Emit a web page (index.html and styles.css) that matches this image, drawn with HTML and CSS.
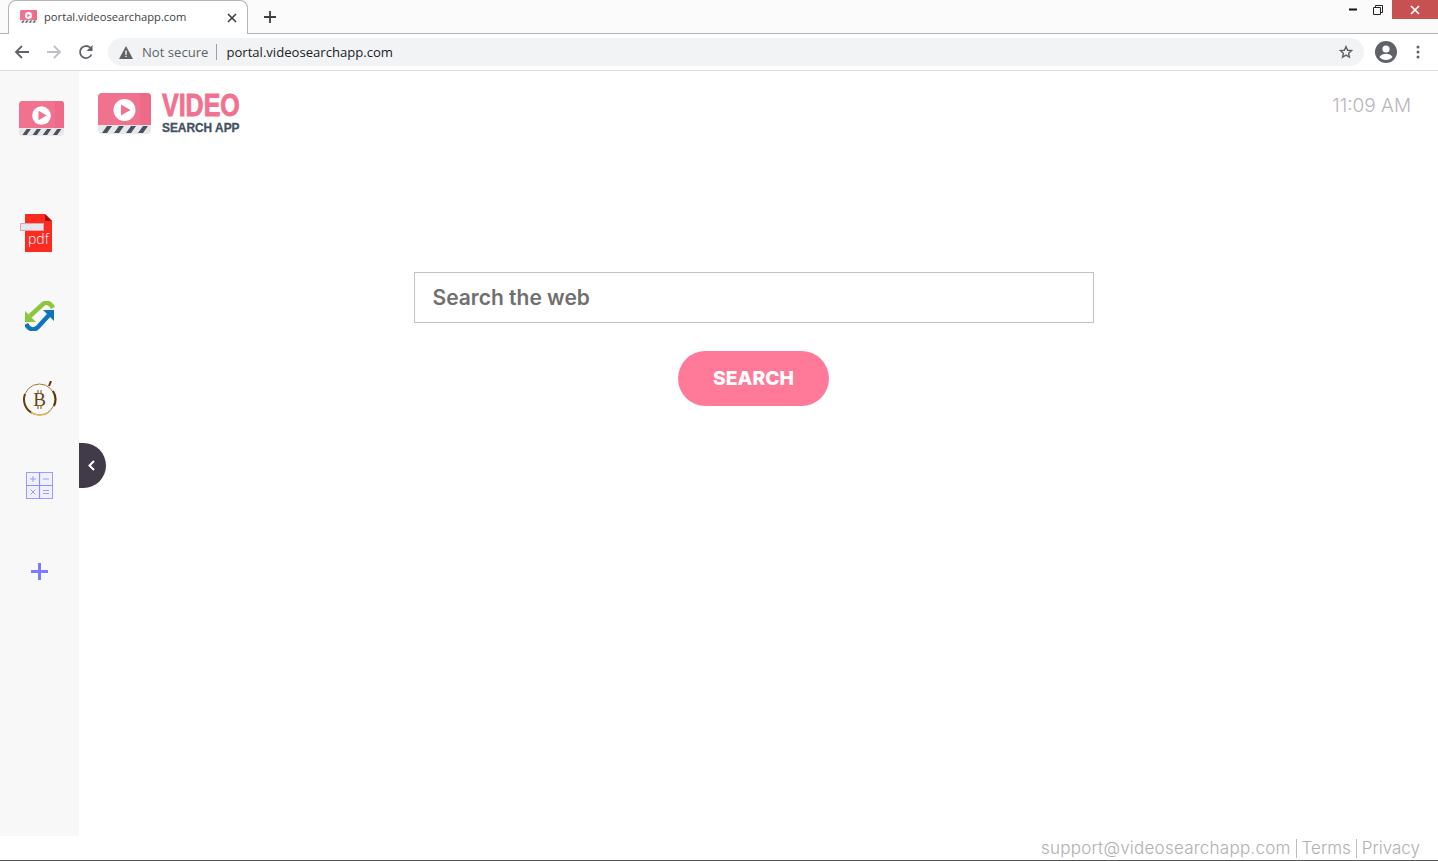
FILE: index.html
```html
<!DOCTYPE html>
<html lang="en">
<head>
<meta charset="utf-8">
<title>portal.videosearchapp.com</title>
<link rel="stylesheet" href="styles.css">
</head>
<body>
<svg class="defs" width="0" height="0" aria-hidden="true">
  <symbol id="mark" viewBox="0 0 53 41">
    <path d="M4 0h45a4 4 0 0 1 4 4v28H0V4a4 4 0 0 1 4-4z" fill="#f0728f"/>
    <path d="M42 0h7a4 4 0 0 1 4 4v28H42z" fill="#ee6a89"/>
    <path d="M0 32h53v5a4 4 0 0 1-4 4H4a4 4 0 0 1-4-4z" fill="#e8e8ea"/>
    <path d="M4 40l5-7h5l-5 7zM16 40l5-7h5l-5 7zM28 40l5-7h5l-5 7zM40 40l5-7h5l-5 7z" fill="#47525e"/>
    <circle cx="26.500" cy="17" r="11" fill="#fff"/>
    <path d="M23 11.500l9.500 5.500-9.500 5.500z" fill="#f0728f"/>
  </symbol>
</svg>

<header class="tabstrip">
  <div class="tab">
    <svg class="tab-icon" width="17" height="13"><use href="#mark"/></svg>
    <span class="tab-title">portal.videosearchapp.com</span>
    <svg class="tab-close" width="10" height="10" viewBox="0 0 10 10"><path d="M1 1l8 8M9 1l-8 8" stroke="#3c4043" stroke-width="1.600"/></svg>
  </div>
  <svg class="new-tab" width="12" height="12" viewBox="0 0 12 12"><path d="M6 0v12M0 6h12" stroke="#3c4043" stroke-width="1.800"/></svg>
  <div class="window-controls">
    <svg class="win-btn" width="8" height="3" viewBox="0 0 8 3"><path d="M0 1.500h8" stroke="#111" stroke-width="2"/></svg>
    <svg class="win-btn" width="10" height="10" viewBox="0 0 10 10"><path d="M.5 2.500h7v7h-7zM2.500 2.500v-2h7v7h-2" fill="none" stroke="#222"/></svg>
    <div class="win-close"><svg width="10" height="10" viewBox="0 0 10 10"><path d="M1 1l8 8M9 1l-8 8" stroke="#fff" stroke-width="1.700"/></svg></div>
  </div>
</header>

<nav class="toolbar">
  <svg class="nav-icon" width="16" height="16" viewBox="0 0 16 16"><path d="M15 8H2M8 2L2 8l6 6" fill="none" stroke="#5f6368" stroke-width="1.800"/></svg>
  <svg class="nav-icon" width="16" height="16" viewBox="0 0 16 16"><path d="M1 8h13M8 2l6 6-6 6" fill="none" stroke="#bdc1c6" stroke-width="1.800"/></svg>
  <svg class="nav-icon" width="16" height="16" viewBox="0 0 16 16"><path d="M13.500 10.500A6 6 0 1 1 12.200 3.700" fill="none" stroke="#5f6368" stroke-width="1.800"/><path d="M14.500 1v6h-6z" fill="#5f6368"/></svg>
  <div class="omnibox">
    <svg class="warn" width="14" height="13" viewBox="0 0 14 13"><path d="M7 0l7 13H0z" fill="#5f6368"/><path d="M6.300 4.500h1.400v4.200H6.300zM6.300 9.700h1.400v1.400H6.300z" fill="#fff"/></svg>
    <span class="not-secure">Not secure</span>
    <span class="omni-sep"></span>
    <span class="url">portal.videosearchapp.com</span>
    <svg class="star" width="14" height="14" viewBox="0 0 24 24"><path d="M12 2.800l2.800 6.200 6.700.7-5 4.500 1.400 6.600-5.900-3.400-5.900 3.400 1.400-6.600-5-4.500 6.700-.7z" fill="none" stroke="#5f6368" stroke-width="2.400"/></svg>
  </div>
  <svg class="avatar" width="22" height="22" viewBox="0 0 22 22"><circle cx="11" cy="11" r="11" fill="#5f6368"/><circle cx="11" cy="8" r="3.600" fill="#fff"/><path d="M4.500 16c1.500-2.500 4-3.200 6.500-3.200s5 .7 6.500 3.200c-1.500 2-3.800 3-6.500 3s-5-1-6.500-3z" fill="#fff"/></svg>
  <svg class="menu" width="4" height="14" viewBox="0 0 4 14"><circle cx="2" cy="2" r="1.500" fill="#5f6368"/><circle cx="2" cy="7" r="1.500" fill="#5f6368"/><circle cx="2" cy="12" r="1.500" fill="#5f6368"/></svg>
</nav>

<div class="page">
  <aside class="sidebar">
    <svg class="side-video" width="45" height="35"><use href="#mark"/></svg>
    <svg class="side-pdf" width="33" height="38" viewBox="0 0 33 38">
      <path d="M5 0h20l7 7v31H5z" fill="#fb2b21"/>
      <path d="M25 0l7 7h-7z" fill="#a80f0a"/>
      <rect x=".5" y="9.500" width="23" height="7" fill="#e6e6ea" stroke="#e3a4ad"/>
      <text class="pdf-label" x="8" y="30">pdf</text>
    </svg>
    <svg class="side-swap" width="30" height="30" viewBox="0 0 30 30">
      <path d="M28 7C25 1 21 1 18 3L5 15" fill="none" stroke="#8cc63f" stroke-width="4.500"/>
      <path d="M0 10v11h11z" fill="#8cc63f"/>
      <path d="M1 23c3 6 8 7 12 3L24 14" fill="none" stroke="#0f73bd" stroke-width="4.500"/>
      <path d="M29 9v11L18 9z" fill="#0f73bd"/>
    </svg>
    <svg class="side-btc" width="36" height="38" viewBox="0 0 36 38">
      <circle cx="17.500" cy="18.500" r="15.500" fill="none" stroke="#a87a30" stroke-width="1"/>
      <path d="M3 13A15.500 15.500 0 0 0 10 32" fill="none" stroke="#6b3f0a" stroke-width="2"/>
      <path d="M31 10A15.500 15.500 0 0 1 32 25M27 5l2-5" fill="none" stroke="#5b360a" stroke-width="2"/>
      <path d="M9 31c5 4 13 4 18 0" fill="none" stroke="#d9b860" stroke-width="1.500"/>
      <path d="M16 9v3M19 9v3M16 25v3M19 25v3" stroke="#7a5010"/>
      <text class="btc-label" x="17.500" y="25" text-anchor="middle">B</text>
    </svg>
    <svg class="side-calc" width="27" height="27" viewBox="0 0 27 27">
      <rect x=".5" y=".5" width="26" height="26" fill="#f1f1fb" stroke="#9a9aff"/>
      <path d="M13.500 0v27M0 13.500h27" stroke="#8f8fff" stroke-width="1.200"/>
      <path d="M4 7h6M7 4v6M17 7h6M4.500 17.500l5 5M9.500 17.500l-5 5M17 18.500h6M17 21.500h6" stroke="#9a9aff"/>
    </svg>
    <svg class="side-add" width="17" height="17" viewBox="0 0 17 17"><path d="M8.500 0v17M0 8.500h17" stroke="#7b7bff" stroke-width="3"/></svg>
  </aside>

  <button class="drawer-toggle" type="button" aria-label="Collapse">
    <svg width="7" height="11" viewBox="0 0 7 11"><path d="M6 1L1.500 5.500 6 10" fill="none" stroke="#fff" stroke-width="2"/></svg>
  </button>

  <main class="content">
    <div class="top-row">
      <div class="logo">
        <svg class="logo-mark" width="53" height="41"><use href="#mark"/></svg>
        <div class="logo-words">
          <span class="logo-video">VIDEO</span>
          <span class="logo-search">SEARCH APP</span>
        </div>
      </div>
      <div class="clock">11:09 AM</div>
    </div>
    <form class="search">
      <input class="search-input" type="text" placeholder="Search the web">
      <button class="search-btn" type="button">SEARCH</button>
    </form>
  </main>
</div>

<footer class="footer">
  <a class="foot-link foot-mail">support@videosearchapp.com</a>
  <a class="foot-link foot-divided">Terms</a>
  <a class="foot-link foot-divided">Privacy</a>
</footer>
</body>
</html>
```
FILE: styles.css
```css
* { box-sizing: border-box; }
html, body { margin: 0; height: 861px; overflow: hidden; }
body {
  display: flex;
  flex-direction: column;
  background: #fff;
  font-family: "Inter", "Liberation Sans", sans-serif;
  border-bottom: 1px solid #555;
}
.defs { position: absolute; }

/* browser tab strip */
.tabstrip {
  flex: none;
  height: 34px;
  display: flex;
  align-items: center;
  background: #fbfbfb;
  border-bottom: 1px solid #b4b4b4;
  padding-left: 8px;
}
.tab {
  width: 240px;
  height: 34px;
  display: flex;
  align-items: center;
  padding: 0 10px 2px 11px;
  background: #fff;
  border: 1px solid #b4b4b4;
  border-bottom: 0;
  border-radius: 8px 8px 0 0;
  align-self: flex-start;
}
.tab-icon { flex: none; }
.tab-title {
  flex: 1;
  margin-left: 7px;
  font: 11.200px "Open Sans", sans-serif;
  color: #3c4043;
}
.tab-close { margin-top: 2px; }
.new-tab { margin-left: 16px; }
.window-controls {
  margin-left: auto;
  align-self: flex-start;
  display: flex;
  align-items: center;
}
.win-btn { margin-right: 16px; }
.win-btn + .win-btn { margin-right: 9px; }
.win-close {
  width: 46px;
  height: 19px;
  background: #c75050;
  display: flex;
  align-items: center;
  justify-content: center;
}

/* browser toolbar */
.toolbar {
  flex: none;
  height: 37px;
  display: flex;
  align-items: center;
  padding: 0 0 0 14px;
  background: #fff;
  border-bottom: 1px solid #dadce0;
}
.nav-icon { margin-right: 16px; }
.omnibox {
  width: 1256px;
  height: 28px;
  margin-left: -2px;
  display: flex;
  align-items: center;
  padding: 0 11px;
  background: #f1f3f4;
  border-radius: 14px;
}
.warn { flex: none; }
.not-secure {
  margin-left: 9px;
  font: 13.100px "Open Sans", sans-serif;
  color: #5f6368;
}
.omni-sep { width: 1px; height: 16px; margin: 0 9px 0 8px; background: #9aa0a6; }
.url { flex: 1; font: 13.100px "Open Sans", sans-serif; color: #202124; }
.star { flex: none; }
.avatar { flex: none; margin-left: 11px; }
.menu { flex: none; margin-left: 19px; }

/* page */
.page { flex: 1; min-height: 0; display: flex; position: relative; }
.sidebar {
  flex: none;
  width: 79px;
  background: #f8f8f8;
  display: flex;
  flex-direction: column;
  align-items: center;
  padding-top: 30px;
}
.side-video { margin-left: 4px; }
.side-pdf { margin-top: 78px; margin-left: -6px; }
.pdf-label { font: 300 14px "Open Sans", sans-serif; fill: #fff; }
.side-swap { margin-top: 49px; }
.side-btc { margin-top: 50px; }
.btc-label { font: 400 19px "Liberation Serif", serif; fill: #6b4310; }
.side-calc { margin-top: 53px; }
.side-add { margin-top: 64px; }

.drawer-toggle {
  position: absolute;
  left: 79px;
  top: 372px;
  width: 27px;
  height: 45px;
  padding: 0 3px 0 0;
  border: 0;
  background: #413a49;
  border-radius: 0 23px 23px 0;
  display: flex;
  align-items: center;
  justify-content: center;
}

.content {
  flex: 1;
  min-width: 0;
  display: flex;
  flex-direction: column;
  padding: 21px 27px 0 19px;
}
.top-row { display: flex; justify-content: space-between; align-items: flex-start; }
.logo { display: flex; align-items: flex-start; gap: 11px; height: 44px; }
.logo-mark { margin-top: 1px; }
.logo-words { display: flex; flex-direction: column; align-items: flex-start; padding-top: 2px; }
.logo-video {
  display: block;
  font: 700 25px/23px "Liberation Sans", sans-serif;
  color: #f0728f;
  -webkit-text-stroke: .7px #f0728f;
  transform: scaleY(1.250);
}
.logo-search {
  display: block;
  margin-top: 5px;
  font: 700 11.900px/12px "Liberation Sans", sans-serif;
  color: #44505e;
  -webkit-text-stroke: .3px #44505e;
  transform: scaleY(1.100);
}
.clock {
  font-size: 19px;
  font-weight: 300;
  line-height: 28px;
  color: #b9b5bc;
}
.search {
  margin-top: 136px;
  margin-left: -2px;
  display: flex;
  flex-direction: column;
  align-items: center;
}
.search-input {
  width: 680px;
  height: 51px;
  padding: 0 18px 1px;
  border: 1px solid #c2c2c2;
  outline: 0;
  background: #fff;
  font: 600 21px "Inter", sans-serif;
  color: #707070;
}
.search-input::placeholder { color: #707070; opacity: 1; }
.search-btn {
  width: 151px;
  height: 55px;
  margin-top: 28px;
  padding: 0 0 2px;
  border: 0;
  border-radius: 28px;
  background: #ff7a99;
  color: #fff;
  font: 800 19.300px "Inter", sans-serif;
}

.footer {
  flex: none;
  height: 24px;
  display: flex;
  align-items: center;
  justify-content: flex-end;
  padding-right: 18px;
  background: #fff;
  font-size: 17px;
  font-weight: 300;
  color: #b0b0b0;
}
.foot-mail { letter-spacing: .24px; }
.foot-divided { margin-left: 5px; padding-left: 5px; border-left: 1px solid #bdbdbd; line-height: 19px; }
```
